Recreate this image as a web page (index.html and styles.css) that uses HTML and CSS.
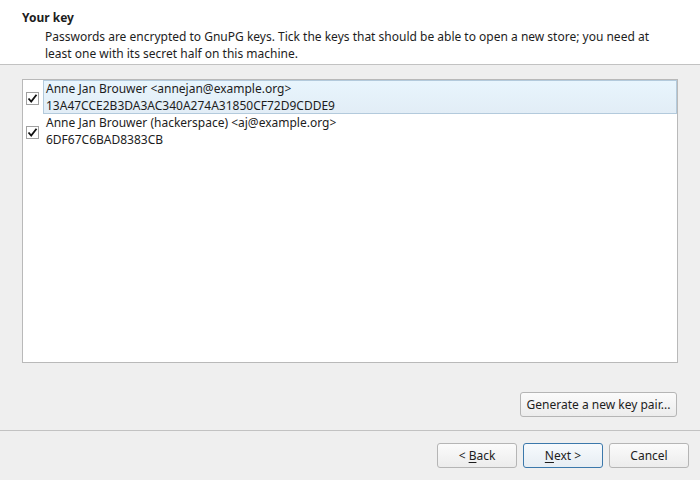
FILE: index.html
```html
<!DOCTYPE html>
<html>
<head>
<meta charset="utf-8">
<link rel="stylesheet" href="styles.css">
</head>
<body>
<div class="wizard">
  <div class="header">
    <div class="title">Your key</div>
    <div class="subtitle">Passwords are encrypted to GnuPG keys. Tick the keys that should be able to open a new store; you need at least one with its secret half on this machine.</div>
  </div>
  <div class="main">
    <div class="list">
      <div class="row">
        <div class="check-cell">
          <span class="checkbox"><svg width="11" height="11" viewBox="0 0 11 11"><path d="M1.5 5.5 L4.2 8.5 L9.5 1.8" fill="none" stroke="#111" stroke-width="1.8"/></svg></span>
        </div>
        <div class="item selected">
          <div>Anne Jan Brouwer &lt;annejan@example.org&gt;</div>
          <div>13A47CCE2B3DA3AC340A274A31850CF72D9CDDE9</div>
        </div>
      </div>
      <div class="row">
        <div class="check-cell">
          <span class="checkbox"><svg width="11" height="11" viewBox="0 0 11 11"><path d="M1.5 5.5 L4.2 8.5 L9.5 1.8" fill="none" stroke="#111" stroke-width="1.8"/></svg></span>
        </div>
        <div class="item">
          <div>Anne Jan Brouwer (hackerspace) &lt;aj@example.org&gt;</div>
          <div>6DF67C6BAD8383CB</div>
        </div>
      </div>
    </div>
    <div class="gen-row">
      <button class="btn gen">Generate a new key pair...</button>
    </div>
  </div>
  <div class="footer">
    <button class="btn nav">&lt; <u>B</u>ack</button>
    <button class="btn nav default"><u>N</u>ext &gt;</button>
    <button class="btn nav">Cancel</button>
  </div>
</div>
</body>
</html>
```
FILE: styles.css
```css
html, body {
  margin: 0;
  padding: 0;
}
body {
  background: #efefef;
  font-family: "Noto Sans", "DejaVu Sans", sans-serif;
  font-size: 12px;
  color: #1d1d1d;
}
.wizard {
  width: 700px;
  height: 480px;
  display: flex;
  flex-direction: column;
}
.header {
  background: #ffffff;
  height: 65px;
  box-sizing: border-box;
  padding: 9px 10px 0 22px;
  border-bottom: 1px solid #c2c2c2;
  line-height: 17px;
  flex: none;
}
.title {
  font-weight: bold;
  margin-bottom: 2px;
}
.subtitle {
  padding-left: 23px;
  padding-right: 35px;
}
.main {
  height: 366px;
  box-sizing: border-box;
  padding: 14px 22px 0 22px;
  border-bottom: 1px solid #c2c2c2;
  display: flex;
  flex-direction: column;
  flex: none;
}
.list {
  height: 284px;
  box-sizing: border-box;
  background: #ffffff;
  border: 1px solid #b9b9b9;
}
.row {
  display: flex;
  height: 34px;
}
.check-cell {
  width: 20px;
  flex: none;
  display: flex;
  align-items: center;
  padding-left: 3px;
  padding-top: 2px;
  box-sizing: border-box;
}
.checkbox {
  width: 13px;
  height: 13px;
  box-sizing: border-box;
  border: 1px solid #a0a0a0;
  background: #ffffff;
  display: flex;
  align-items: center;
  justify-content: center;
}
.checkbox svg {
  display: block;
}
.item {
  flex: 1;
  box-sizing: border-box;
  padding: 0 0 0 2px;
  line-height: 17px;
  border: 1px solid transparent;
  display: flex;
  flex-direction: column;
  justify-content: center;
}
.item.selected {
  background: linear-gradient(#e8f5fd, #e2edf6);
  border-color: #b3cadc;
}
.gen-row {
  display: flex;
  justify-content: flex-end;
  margin-top: 29px;
  padding-right: 1px;
}
.btn {
  font-family: "Noto Sans", "DejaVu Sans", sans-serif;
  font-size: 12px;
  color: #1d1d1d;
  height: 25px;
  box-sizing: border-box;
  border: 1px solid #b5b5b5;
  border-radius: 3px;
  background: linear-gradient(#fbfbfb, #ececec);
  padding: 0 4px;
  margin: 0;
  line-height: 20px;
  white-space: nowrap;
}
.btn u {
  text-decoration-thickness: 1px;
  text-underline-offset: 2px;
}
.gen {
  width: 157px;
}
.footer {
  flex: none;
  display: flex;
  justify-content: flex-end;
  gap: 6px;
  padding: 12px 11px 0 0;
}
.nav {
  width: 80px;
}
.nav.default {
  border-color: #3b78ab;
  background: linear-gradient(#f7fafd, #e6edf3);
}
```
